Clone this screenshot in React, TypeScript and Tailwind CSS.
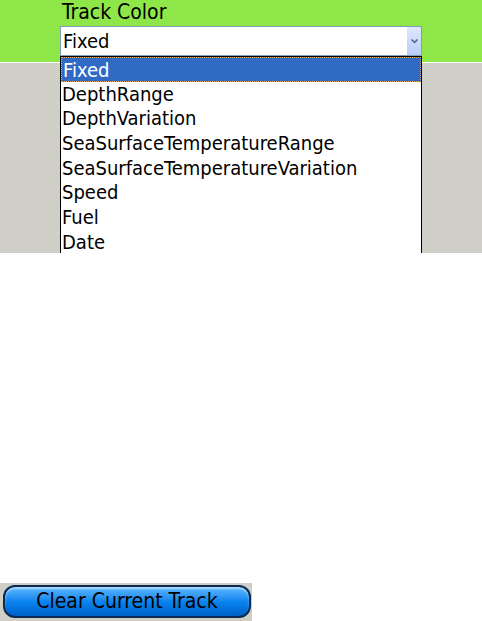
import React from "react"

const options = [
  "Fixed",
  "DepthRange",
  "DepthVariation",
  "SeaSurfaceTemperatureRange",
  "SeaSurfaceTemperatureVariation",
  "Speed",
  "Fuel",
  "Date",
]

export default function App() {
  const font = { fontFamily: "Tahoma, 'DejaVu Sans Condensed', 'Liberation Sans', sans-serif" }
  return (
    <div className="w-[482px] h-[621px] bg-white flex flex-col text-black" style={font}>
      <div className="relative h-[253px] overflow-hidden flex flex-col">
        <div className="h-[62px] bg-[#8fe648] pl-[60px] pt-[1px]">
          <div className="text-[21px] leading-[22px] pl-[2px]">Track Color</div>
          <div className="mt-[3px] w-[362px] h-[30px] border border-[#7f9db9] bg-white flex items-center">
            <span className="flex-1 pl-[2px] text-[20px]">Fixed</span>
            <div className="w-[14px] h-[28px] bg-gradient-to-b from-[#dfe8fd] to-[#b9cdf8] flex items-center justify-center">
              <svg width="7" height="5" viewBox="0 0 7 5">
                <path d="M0.5 0.5 L3.5 3.5 L6.5 0.5" stroke="#4d6185" strokeWidth="1.5" fill="none" />
              </svg>
            </div>
          </div>
        </div>
        <div className="h-[1px] bg-white" />
        <div className="flex-1 bg-[#cfcfc7]" />

        <div className="absolute left-[60px] top-[56px] w-[362px] h-[260px] border border-black bg-white">
          {options.map((o, i) => (
            <div
              key={o}
              className={`h-[24.7px] leading-[24px] pl-[1px] text-[20px] ${
                i === 0 ? "bg-[#316ac5] text-white border border-dotted border-[#e8a85a]" : ""
              }`}
            >
              {o}
            </div>
          ))}
        </div>
      </div>

      <div className="flex-1" />

      <div className="w-[252px] h-[38px] bg-[#cfcfc7] pl-[3px] pt-[2px]">
        <button className="w-[248px] h-[33px] rounded-[12px] border-2 border-[#0b2a4f] bg-gradient-to-b from-[#5ab8ff] via-[#0a84ee] to-[#0060c8] text-[21px] leading-none text-black flex items-center justify-center shadow-[inset_0_2px_2px_rgba(255,255,255,0.5)]">
          Clear Current Track
        </button>
      </div>
    </div>
  )
}
